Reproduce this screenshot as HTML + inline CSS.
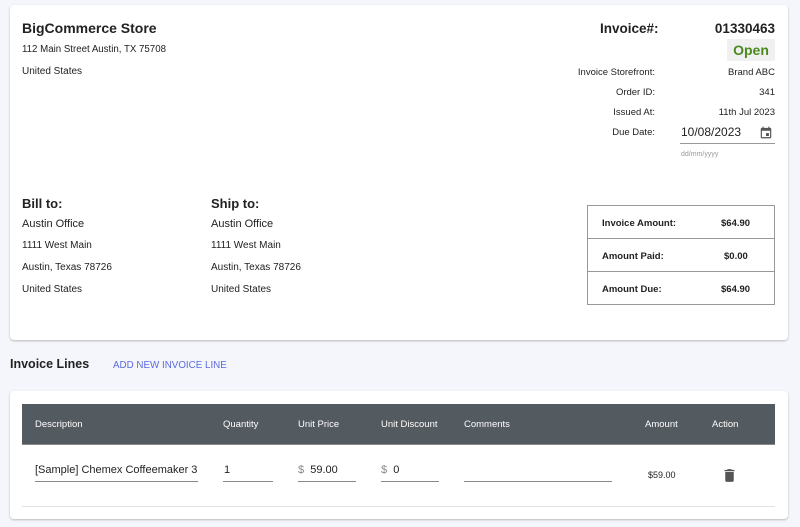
<!DOCTYPE html>
<html><head><meta charset="utf-8"><style>
*{margin:0;padding:0;box-sizing:border-box}
body{width:800px;height:527px;background:#f5f6fb;font-family:"Liberation Sans",sans-serif;color:#222;position:relative;overflow:hidden}
.a{position:absolute;white-space:nowrap}
.card{position:absolute;background:#fff;border-radius:4px;box-shadow:0 1px 2px rgba(0,0,0,.25)}
.s{font-size:10px}
.sr{font-size:9.5px}
.r{text-align:right}
.tot{position:absolute;left:587px;width:188px;height:34px;border:1px solid #999;font-size:9.5px;font-weight:bold}
.tot span{position:absolute;top:12px}
.th{color:#fff;font-size:9.5px;top:419px}
.ul{position:absolute;border-bottom:1px solid #888;height:1px}
</style></head><body>
<div class="card" style="left:10px;top:5px;width:778px;height:335px"></div>
<div class="a" style="left:22px;top:20px;font-size:14px;font-weight:bold">BigCommerce Store</div>
<div class="a s" style="left:22px;top:44px;font-size:9.7px">112 Main Street Austin, TX 75708</div>
<div class="a s" style="left:22px;top:66px">United States</div>

<div class="a" style="left:600px;top:21px;font-size:13.5px;font-weight:bold">Invoice#:</div>
<div class="a" style="left:700px;top:21px;width:75px;text-align:right;font-size:13.5px;font-weight:bold">01330463</div>
<div class="a" style="left:727px;top:39px;width:48px;height:22px;background:#f0f0f0;color:#4a8a1e;font-weight:bold;font-size:14px;text-align:center;line-height:22px">Open</div>
<div class="a sr r" style="left:540px;width:115px;top:67px">Invoice Storefront:</div>
<div class="a sr r" style="left:680px;width:95px;top:67px">Brand ABC</div>
<div class="a sr r" style="left:540px;width:115px;top:87px">Order ID:</div>
<div class="a sr r" style="left:680px;width:95px;top:87px">341</div>
<div class="a sr r" style="left:540px;width:115px;top:107px">Issued At:</div>
<div class="a sr r" style="left:680px;width:95px;top:107px">11th Jul 2023</div>
<div class="a sr r" style="left:540px;width:115px;top:127px">Due Date:</div>
<div class="a" style="left:681px;top:125px;font-size:12px">10/08/2023</div>
<svg class="a" style="left:759px;top:125px" width="14" height="15" viewBox="0 0 24 24"><path fill="#555" d="M19 4h-1V2h-2v2H8V2H6v2H5c-1.1 0-2 .9-2 2v14c0 1.1.9 2 2 2h14c1.1 0 2-.9 2-2V6c0-1.1-.9-2-2-2zm0 16H5V9h14v11zM12 13h5v5h-5z"/></svg>
<div class="ul" style="left:680px;top:143px;width:95px;border-color:#999"></div>
<div class="a" style="left:681px;top:151px;font-size:7px;color:#999">dd/mm/yyyy</div>

<div class="a" style="left:22px;top:196px;font-size:13px;font-weight:bold">Bill to:</div>
<div class="a" style="left:22px;top:218px;font-size:11px">Austin Office</div>
<div class="a s" style="left:22px;top:240px">1111 West Main</div>
<div class="a s" style="left:22px;top:262px">Austin, Texas 78726</div>
<div class="a s" style="left:22px;top:284px">United States</div>
<div class="a" style="left:211px;top:196px;font-size:13px;font-weight:bold">Ship to:</div>
<div class="a" style="left:211px;top:218px;font-size:11px">Austin Office</div>
<div class="a s" style="left:211px;top:240px">1111 West Main</div>
<div class="a s" style="left:211px;top:262px">Austin, Texas 78726</div>
<div class="a s" style="left:211px;top:284px">United States</div>

<div class="tot" style="top:205px"><span style="left:14px">Invoice Amount:</span><span style="left:133px">$64.90</span></div>
<div class="tot" style="top:238px"><span style="left:14px">Amount Paid:</span><span style="left:136px">$0.00</span></div>
<div class="tot" style="top:271px"><span style="left:14px">Amount Due:</span><span style="left:133px">$64.90</span></div>

<div class="a" style="left:10px;top:357px;font-size:12.5px;font-weight:bold">Invoice Lines</div>
<div class="a" style="left:113px;top:360px;font-size:9.8px;color:#5a6be0">ADD NEW INVOICE LINE</div>

<div class="card" style="left:10px;top:391px;width:778px;height:128px"></div>
<div class="a" style="left:22px;top:404px;width:753px;height:41px;background:#535a60;border-bottom:1px solid #888"></div>
<div class="a th" style="left:35px">Description</div>
<div class="a th" style="left:223px">Quantity</div>
<div class="a th" style="left:298px">Unit Price</div>
<div class="a th" style="left:381px">Unit Discount</div>
<div class="a th" style="left:464px">Comments</div>
<div class="a th" style="left:645px">Amount</div>
<div class="a th" style="left:712px">Action</div>

<div class="a" style="left:35px;top:464px;font-size:11px">[Sample] Chemex Coffeemaker 3</div>
<div class="ul" style="left:35px;top:481px;width:163px"></div>
<div class="a" style="left:224px;top:464px;font-size:11px">1</div>
<div class="ul" style="left:223px;top:481px;width:50px"></div>
<div class="a" style="left:298px;top:464px;font-size:11px"><span style="color:#888">$</span>&nbsp; 59.00</div>
<div class="ul" style="left:298px;top:481px;width:58px"></div>
<div class="a" style="left:381px;top:464px;font-size:11px"><span style="color:#888">$</span>&nbsp; 0</div>
<div class="ul" style="left:381px;top:481px;width:58px"></div>
<div class="ul" style="left:464px;top:481px;width:148px"></div>
<div class="a" style="left:648px;top:470px;font-size:9px">$59.00</div>
<svg class="a" style="left:721px;top:466px" width="17" height="19" viewBox="0 0 24 24"><path fill="#555" d="M6 19c0 1.1.9 2 2 2h8c1.1 0 2-.9 2-2V7H6v12zM19 4h-3.5l-1-1h-5l-1 1H5v2h14V4z"/></svg>
<div class="a" style="left:22px;top:506px;width:753px;border-top:1px solid #e3e3e3"></div>
</body></html>
